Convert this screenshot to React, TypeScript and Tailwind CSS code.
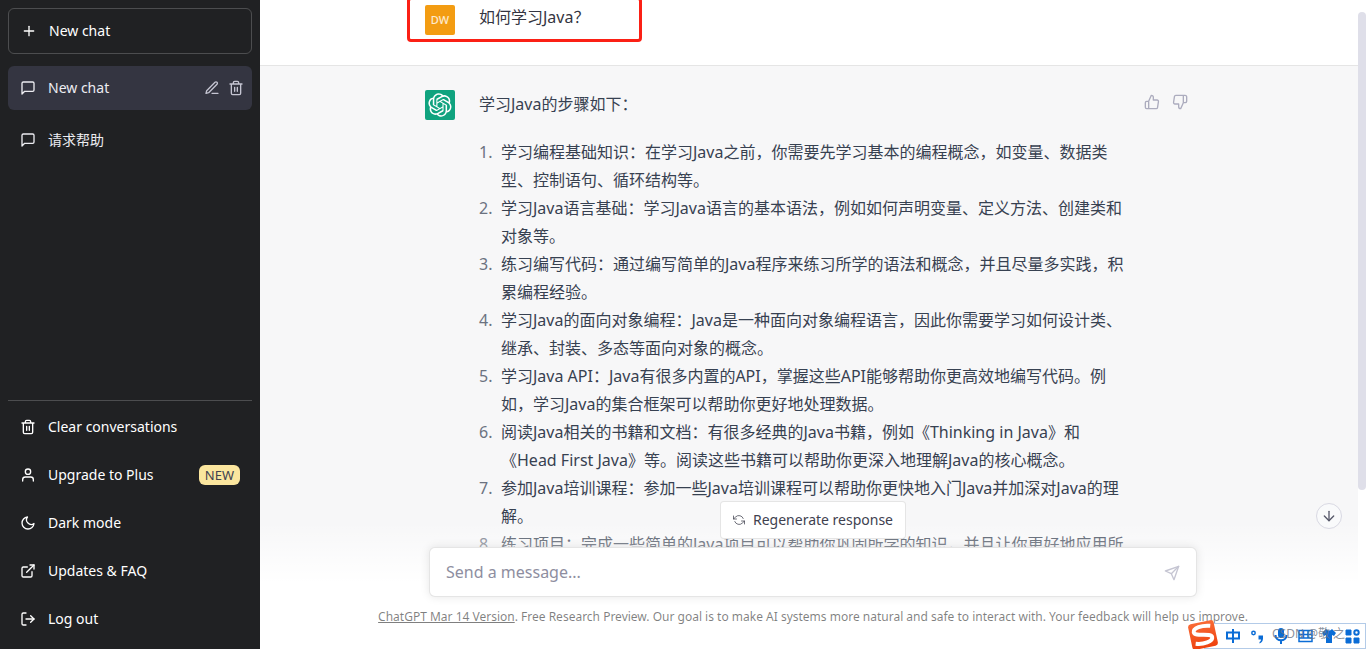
import { useState } from 'react';
import type { ReactNode } from 'react';
import {
  FiArrowDown,
  FiExternalLink,
  FiLogOut,
  FiMessageSquare,
  FiMoon,
  FiPlus,
  FiRefreshCcw,
  FiSend,
  FiThumbsDown,
  FiThumbsUp,
  FiUser,
} from 'react-icons/fi';

const steps = [
  '学习编程基础知识：在学习Java之前，你需要先学习基本的编程概念，如变量、数据类型、控制语句、循环结构等。',
  '学习Java语言基础：学习Java语言的基本语法，例如如何声明变量、定义方法、创建类和对象等。',
  '练习编写代码：通过编写简单的Java程序来练习所学的语法和概念，并且尽量多实践，积累编程经验。',
  '学习Java的面向对象编程：Java是一种面向对象编程语言，因此你需要学习如何设计类、继承、封装、多态等面向对象的概念。',
  '学习Java API：Java有很多内置的API，掌握这些API能够帮助你更高效地编写代码。例如，学习Java的集合框架可以帮助你更好地处理数据。',
  '阅读Java相关的书籍和文档：有很多经典的Java书籍，例如《Thinking in Java》和《Head First Java》等。阅读这些书籍可以帮助你更深入地理解Java的核心概念。',
  '参加Java培训课程：参加一些Java培训课程可以帮助你更快地入门Java并加深对Java的理解。',
  '练习项目：完成一些简单的Java项目可以帮助你巩固所学的知识，并且让你更好地应用所学的内容。',
];

function TrashIcon({ className }: { className?: string }) {
  return (
    <svg viewBox="0 0 24 24" fill="none" stroke="currentColor" strokeWidth="2" strokeLinecap="round" strokeLinejoin="round" className={className}>
      <path d="M3 6h18M19 6v14a2 2 0 0 1-2 2H7a2 2 0 0 1-2-2V6m3 0V4a2 2 0 0 1 2-2h4a2 2 0 0 1 2 2v2M10 11v6M14 11v6" />
    </svg>
  );
}

function PencilIcon({ className }: { className?: string }) {
  return (
    <svg viewBox="0 0 24 24" fill="none" stroke="currentColor" strokeWidth="2" strokeLinecap="round" strokeLinejoin="round" className={className}>
      <path d="M12 20h9M16.5 3.5a2.121 2.121 0 0 1 3 3L7 19l-4 1 1-4L16.5 3.5z" />
    </svg>
  );
}

function OpenAiLogo() {
  return (
    <svg viewBox="0 0 41 41" fill="currentColor" className="size-6">
      <path d="M37.5324 16.8707C37.9808 15.5241 38.1363 14.0974 37.9886 12.6859C37.8409 11.2744 37.3934 9.91076 36.676 8.68622C35.6126 6.83404 33.9882 5.3676 32.0373 4.4985C30.0864 3.62941 27.9098 3.40259 25.8215 3.85078C24.8796 2.7893 23.7219 1.94125 22.4257 1.36341C21.1295 0.785575 19.7249 0.491269 18.3058 0.500197C16.1708 0.495044 14.0893 1.16803 12.3614 2.42214C10.6335 3.67624 9.34853 5.44666 8.6917 7.47815C7.30085 7.76286 5.98686 8.3414 4.8377 9.17505C3.68854 10.0087 2.73073 11.0782 2.02839 12.312C0.956464 14.1591 0.498905 16.2988 0.721698 18.4228C0.944492 20.5467 1.83612 22.5449 3.268 24.1293C2.81966 25.4759 2.66413 26.9026 2.81182 28.3141C2.95951 29.7256 3.40701 31.0892 4.12437 32.3138C5.18791 34.1659 6.8123 35.6322 8.76321 36.5013C10.7141 37.3704 12.8907 37.5973 14.9789 37.1492C15.9208 38.2107 17.0786 39.0587 18.3747 39.6366C19.6709 40.2144 21.0755 40.5087 22.4946 40.4998C24.6307 40.5054 26.7133 39.8321 28.4418 38.5772C30.1704 37.3223 31.4556 35.5506 32.1119 33.5179C33.5027 33.2332 34.8167 32.6547 35.9659 31.821C37.115 30.9874 38.0728 29.9178 38.7752 28.684C39.8458 26.8371 40.3023 24.6979 40.0789 22.5748C39.8556 20.4517 38.9639 18.4544 37.5324 16.8707ZM22.4978 37.8849C20.7443 37.8874 19.0459 37.2733 17.6994 36.1501C17.7601 36.117 17.8666 36.0586 17.936 36.0161L25.9004 31.4156C26.1003 31.3019 26.2663 31.137 26.3813 30.9378C26.4964 30.7386 26.5563 30.5124 26.5549 30.2825V19.0542L29.9213 20.998C29.9389 21.0068 29.9541 21.0198 29.9656 21.0359C29.977 21.052 29.9842 21.0707 29.9867 21.0902V30.3889C29.9842 32.375 29.1946 34.2791 27.7909 35.6841C26.3872 37.0892 24.4838 37.8806 22.4978 37.8849ZM6.39227 31.0064C5.51397 29.4888 5.19742 27.7107 5.49804 25.9832C5.55718 26.0187 5.66048 26.0818 5.73461 26.1244L13.699 30.7248C13.8975 30.8408 14.1233 30.902 14.3532 30.902C14.583 30.902 14.8088 30.8408 15.0073 30.7248L24.731 25.1103V28.9979C24.7321 29.0177 24.7283 29.0376 24.7199 29.0556C24.7115 29.0736 24.6988 29.0893 24.6829 29.1012L16.6317 33.7497C14.9096 34.7416 12.8643 35.0097 10.9447 34.4954C9.02506 33.9811 7.38785 32.7263 6.39227 31.0064ZM4.29707 13.6194C5.17156 12.0998 6.55279 10.9364 8.19885 10.3327C8.19885 10.4013 8.19491 10.5228 8.19491 10.6071V19.808C8.19351 20.0378 8.25334 20.2638 8.36823 20.4629C8.48312 20.6619 8.64893 20.8267 8.84863 20.9404L18.5723 26.5542L15.206 28.4979C15.1894 28.5089 15.1703 28.5155 15.1505 28.5173C15.1307 28.5191 15.1107 28.516 15.0924 28.5082L7.04046 23.8557C5.32135 22.8601 4.06716 21.2235 3.55289 19.3046C3.03862 17.3858 3.30624 15.3413 4.29707 13.6194ZM31.955 20.0556L22.2312 14.4411L25.5976 12.4981C25.6142 12.4872 25.6333 12.4805 25.6531 12.4787C25.6729 12.4769 25.6928 12.4801 25.7111 12.4879L33.7631 17.1364C34.9967 17.849 36.0017 18.8982 36.6606 20.1613C37.3194 21.4244 37.6047 22.849 37.4832 24.2684C37.3617 25.6878 36.8382 27.0432 35.9743 28.1759C35.1103 29.3086 33.9415 30.1717 32.6047 30.6641C32.6047 30.5947 32.6047 30.4733 32.6047 30.3889V21.188C32.6066 20.9586 32.5474 20.7328 32.4332 20.5338C32.319 20.3348 32.154 20.1698 31.955 20.0556ZM35.3055 15.0128C35.2464 14.9765 35.1431 14.9142 35.069 14.8717L27.1045 10.2712C26.906 10.1554 26.6803 10.0943 26.4504 10.0943C26.2206 10.0943 25.9948 10.1554 25.7963 10.2712L16.0726 15.8858V11.9982C16.0715 11.9783 16.0753 11.9585 16.0837 11.9405C16.0921 11.9225 16.1048 11.9068 16.1207 11.8949L24.1719 7.25025C25.4053 6.53903 26.8158 6.19376 28.2383 6.25482C29.6608 6.31589 31.0364 6.78077 32.2044 7.59508C33.3723 8.40939 34.2842 9.53945 34.8334 10.8531C35.3826 12.1667 35.5464 13.6095 35.3055 15.0128ZM14.2424 21.9419L10.8752 19.9981C10.8576 19.9893 10.8423 19.9763 10.8309 19.9602C10.8195 19.9441 10.8122 19.9254 10.8098 19.9058V10.6071C10.8107 9.18295 11.2173 7.78848 11.9819 6.58696C12.7466 5.38544 13.8377 4.42659 15.1275 3.82264C16.4173 3.21869 17.8524 2.99464 19.2649 3.1767C20.6775 3.35876 22.0089 3.93941 23.1034 4.85067C23.0427 4.88379 22.937 4.94215 22.8668 4.98473L14.9024 9.58517C14.7025 9.69878 14.5366 9.86356 14.4215 10.0626C14.3065 10.2616 14.2466 10.4877 14.2479 10.7175L14.2424 21.9419ZM16.071 17.9991L20.4018 15.4978L24.7325 17.9975V22.9985L20.4018 25.4983L16.071 22.9985V17.9991Z" />
    </svg>
  );
}

function MenuItem({ icon, label, badge }: { icon: ReactNode; label: string; badge?: string }) {
  return (
    <button className="flex h-12 w-full items-center gap-3 rounded-md px-3 text-left text-sm text-white hover:bg-gray-500/10">
      {icon}
      <span className="flex-1">{label}</span>
      {badge && <span className="rounded-md bg-[#fbe69e] px-1.5 text-[13px] leading-5 text-[#40414f]">{badge}</span>}
    </button>
  );
}

function Sidebar() {
  return (
    <nav className="flex w-[260px] shrink-0 flex-col bg-[#202123] px-2 pt-2 pb-1.5 text-sm text-white">
      <button className="mb-3 flex h-[46px] shrink-0 items-center gap-3 rounded-md border border-white/20 px-3">
        <FiPlus className="size-4" />
        New chat
      </button>
      <div className="flex flex-1 flex-col gap-2">
        <div className="flex h-11 items-center gap-3 rounded-md bg-[#343541] pr-2 pl-3 text-[#ececf1]">
          <FiMessageSquare className="size-4" />
          <a href="#chat" className="flex-1">New chat</a>
          <div className="flex gap-2 text-[#c5c5d2]">
            <button aria-label="Rename chat"><PencilIcon className="size-4" /></button>
            <button aria-label="Delete chat"><TrashIcon className="size-4" /></button>
          </div>
        </div>
        <a href="#help" className="flex h-11 items-center gap-3 rounded-md px-3 text-[#ececf1]">
          <FiMessageSquare className="size-4" />
          请求帮助
        </a>
      </div>
      <div className="border-t border-white/20 pt-0.5">
        <MenuItem icon={<TrashIcon className="size-4" />} label="Clear conversations" />
        <MenuItem icon={<FiUser className="size-4" />} label="Upgrade to Plus" badge="NEW" />
        <MenuItem icon={<FiMoon className="size-4" />} label="Dark mode" />
        <MenuItem icon={<FiExternalLink className="size-4" />} label="Updates & FAQ" />
        <MenuItem icon={<FiLogOut className="size-4" />} label="Log out" />
      </div>
    </nav>
  );
}

// Floating input method toolbar in the corner of the screen
function ImeBar() {
  return (
    <div className="absolute right-0 bottom-0 flex h-[26px] w-[162px] items-center border border-[#b3cbe8] bg-white pl-5 text-[#0a6cd6]">
      <svg viewBox="0 0 32 32" className="absolute -top-1 -left-4.5 size-8">
        <defs>
          <linearGradient id="ime-logo" x1="0" y1="0" x2="0" y2="1">
            <stop offset="0" stopColor="#f96a35" />
            <stop offset="1" stopColor="#ee4310" />
          </linearGradient>
        </defs>
        <g transform="rotate(-12 16 15)">
          <rect x="3" y="2" width="26" height="26" rx="3" fill="url(#ime-logo)" />
          <path d="M25 7.500C17 5 7.500 6 7.500 10.500c0 5 17 3.500 17 8.500 0 4.500-10 5.500-17.500 3" fill="none" stroke="#fff" strokeWidth="4" />
        </g>
      </svg>
      <svg viewBox="0 0 140 24" fill="none" stroke="currentColor" strokeWidth="2" className="h-6 w-[140px]">
        <path d="M2 8.500h12v6H2zM8 5v14" />
        <circle cx="28.500" cy="9" r="1.700" strokeWidth="1.500" />
        <path d="M33.500 11.500h4.500v3c0 2.500-1.500 4.500-3.500 5v-1.500c1-.5 1.500-1.500 1.500-2.500h-2.500z" fill="currentColor" stroke="none" />
        <rect x="53" y="4" width="6" height="10" rx="3" fill="currentColor" stroke="none" />
        <path d="M50.500 11c0 7 11 7 11 0M56 16v4" />
        <path d="M74 6.500h13v11H74zM74 10.500h13M74 14h13M78.500 6.500v8M83 6.500v8" strokeWidth="1.500" />
        <path d="m97 9 4-4c2 2 4 2 6 0l4 4-2 3-2-1v8h-6v-8l-2 1z" fill="currentColor" stroke="none" />
        <path d="M121 6h5v5h-5zM121 14h5v5h-5zM129 14h5v5h-5z" fill="currentColor" strokeWidth="1" />
        <circle cx="131.500" cy="8.500" r="2.200" />
      </svg>
      <span className="absolute top-0.5 left-[67px] text-xs whitespace-pre text-gray-500/80">CSDN @敬 之</span>
    </div>
  );
}

export default function App() {
  const [message, setMessage] = useState('');

  return (
    <div className="relative flex h-screen overflow-hidden bg-white font-['Noto_Sans','Noto_Sans_CJK_SC',sans-serif]">
      <Sidebar />

      <main className="relative flex min-w-0 flex-1 flex-col overflow-hidden">
        <div className="flex min-h-0 flex-1">
          <div className="min-w-0 flex-1 overflow-hidden text-base text-[#374151]">
            {/* User message */}
            <section className="border-b border-black/10 pt-[5px] pb-[30px]">
              <div className="relative mx-auto flex max-w-3xl gap-6">
                <div className="flex size-[30px] items-center justify-center rounded-xs bg-[#f39c12] text-[11px] font-medium text-white/80">DW</div>
                <p className="leading-6 text-[#343541]">如何学习Java？</p>
                <div className="absolute -top-2 -left-[18px] h-[45px] w-[235px] rounded-sm border-3 border-[#fb2015]" />
              </div>
            </section>

            {/* Assistant message */}
            <section className="bg-[#f7f7f8] py-6">
              <div className="mx-auto flex max-w-3xl items-start">
                <div className="mr-6 flex size-[30px] shrink-0 items-center justify-center rounded-xs bg-[#10a37f] text-white">
                  <OpenAiLogo />
                </div>
                <div className="min-w-0 flex-1 leading-7">
                  <p className="mb-5">学习Java的步骤如下：</p>
                  <ol>
                    {steps.map((step, i) => (
                      <li key={step} className="flex">
                        <span className="w-[22px] shrink-0 text-[#6b7280]">{i + 1}.</span>
                        <span className="min-w-0 flex-1">{step}</span>
                      </li>
                    ))}
                  </ol>
                </div>
                <div className="flex w-[60px] shrink-0 justify-end gap-3 pt-1 pr-[5px] text-[#acacbe]">
                  <button aria-label="Good response"><FiThumbsUp className="size-4" /></button>
                  <button aria-label="Bad response"><FiThumbsDown className="size-4" /></button>
                </div>
              </div>
            </section>
          </div>
          <div className="w-2 bg-white pt-3">
            <div className="h-[478px] rounded-full bg-[#dfdfe9]" />
          </div>
        </div>

        {/* Composer */}
        <div className="absolute inset-x-0 bottom-0 bg-linear-to-b from-white/0 from-14% to-white to-55% pb-6">
          <form className="mx-auto flex max-w-3xl flex-col items-center gap-2" onSubmit={(e) => e.preventDefault()}>
            <button type="button" className="flex h-[38px] items-center gap-2 rounded border border-black/10 bg-white px-3 text-sm text-[#40414f]">
              <FiRefreshCcw className="size-3" strokeWidth={1.5} />
              Regenerate response
            </button>
            <div className="flex h-[50px] w-full items-center rounded-md border border-black/10 bg-white px-4 shadow-[0_0_10px_rgba(0,0,0,0.10)]">
              <input
                aria-label="Message"
                placeholder="Send a message..."
                value={message}
                onChange={(e) => setMessage(e.target.value)}
                className="min-w-0 flex-1 text-base outline-none placeholder:text-[#8e8ea0]"
              />
              <button aria-label="Send" className="pt-0.5 text-[#c5c5d2]"><FiSend className="size-4" /></button>
            </div>
          </form>
          <p className="pt-3 text-center text-xs leading-4 text-black/50">
            <a href="#release-notes" className="underline">ChatGPT Mar 14 Version</a>. Free Research Preview. Our goal is to make AI systems more natural and safe to interact with. Your feedback will help us improve.
          </p>
        </div>

        <button aria-label="Scroll to bottom" className="absolute right-6 bottom-30 flex size-[26px] items-center justify-center rounded-full border border-[#d9d9e3] bg-gray-50 text-[#565869]">
          <FiArrowDown className="size-4" />
        </button>
      </main>

      <ImeBar />
    </div>
  );
}
